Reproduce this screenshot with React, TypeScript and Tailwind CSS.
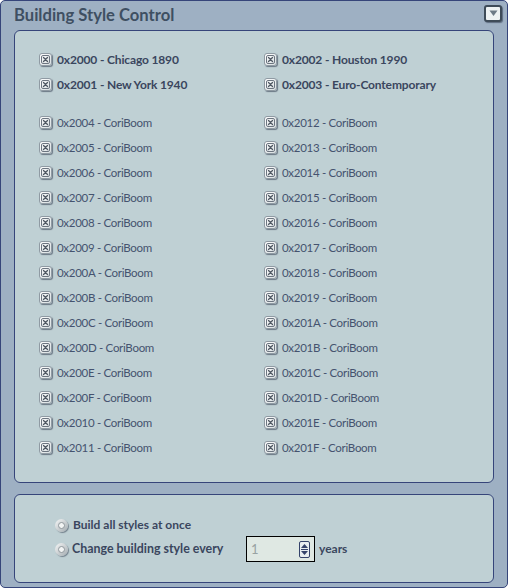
import React from 'react';

const FEATURED = [
  ['0x2000 - Chicago 1890', '0x2002 - Houston 1990'],
  ['0x2001 - New York 1940', '0x2003 - Euro-Contemporary'],
];

const LEFT = ['2004', '2005', '2006', '2007', '2008', '2009', '200A', '200B', '200C', '200D', '200E', '200F', '2010', '2011'];
const RIGHT = ['2012', '2013', '2014', '2015', '2016', '2017', '2018', '2019', '201A', '201B', '201C', '201D', '201E', '201F'];

const CheckBox = () => (
  <span className="relative w-[13px] h-[13px] shrink-0 rounded-[3px] border border-[#8f9aa3] bg-gradient-to-br from-[#ffffff] to-[#d7dee0] shadow-[1px_1px_1px_rgba(40,50,70,0.55)] flex items-center justify-center">
    <svg width="9" height="9" viewBox="0 0 9 9">
      <rect x="0.5" y="0.5" width="8" height="8" rx="1.5" fill="none" stroke="#6c7580" strokeWidth="1" />
      <path d="M2.5 2.5 L6.5 6.5 M6.5 2.5 L2.5 6.5" stroke="#4f5863" strokeWidth="1.3" strokeLinecap="round" />
    </svg>
  </span>
);

const Radio = () => (
  <span className="w-[13px] h-[13px] shrink-0 rounded-full bg-gradient-to-br from-[#f7f8f8] to-[#a3abb0] shadow-[1px_1px_1px_rgba(40,50,70,0.5)] flex items-center justify-center">
    <span className="w-[7px] h-[7px] rounded-full border border-[#8f979c] bg-[#f2f4f4]" />
  </span>
);

const Item = ({ label, bold }: { label: string; bold?: boolean }) => (
  <div className="h-[25px] flex items-center gap-[5px]">
    <CheckBox />
    <span className={`leading-none ${bold ? 'text-[12px] tracking-[-0.15px] font-bold text-[#3a465e]' : 'text-[11.5px] tracking-[-0.3px] text-[#45536f]'}`}>{label}</span>
  </div>
);

export default function App() {
  return (
    <div className="w-[508px] h-[588px] bg-[#9eb0c3] border border-[#36457a] rounded-[5px] flex flex-col px-[13px] pb-[5px]" style={{ fontFamily: 'Lato, "Open Sans", sans-serif' }}>
      <div className="h-[29px] flex items-center justify-between shrink-0">
        <h1 className="text-[16.6px] font-bold text-[#3e4f62] -mt-[1px]">Building Style Control</h1>
        <button className="w-[18px] h-[17px] -mr-[8px] -mt-[4px] rounded-[3px] border-2 border-[#3e4b58] bg-[#eef2f3] shadow-[1px_1px_1px_rgba(30,40,60,0.5)] flex items-center justify-center">
          <svg width="9" height="7" viewBox="0 0 9 7"><path d="M0.5 0.5 L8.5 0.5 L4.5 6 Z" fill="#6d7a86" /></svg>
        </button>
      </div>

      <div className="h-[453px] shrink-0 rounded-[6px] border border-[#36457a] bg-[#bfd0d4] pt-[16px] pl-[24px]">
        <div className="grid grid-cols-[225px_1fr]">
          {FEATURED.map(([a, b]) => (
            <React.Fragment key={a}>
              <Item label={a} bold />
              <Item label={b} bold />
            </React.Fragment>
          ))}
        </div>
        <div className="grid grid-cols-[225px_1fr] mt-[13px]">
          {LEFT.map((l, i) => (
            <React.Fragment key={l}>
              <Item label={`0x${l} - CoriBoom`} />
              <Item label={`0x${RIGHT[i]} - CoriBoom`} />
            </React.Fragment>
          ))}
        </div>
      </div>

      <div className="mt-[11px] h-[89px] shrink-0 rounded-[6px] border border-[#36457a] bg-[#bfd0d4] pt-[18px] pl-[40px]">
        <div className="h-[24px] flex items-center gap-[5px]">
          <Radio />
          <span className="text-[12px] font-bold text-[#3a465e]">Build all styles at once</span>
        </div>
        <div className="h-[24px] flex items-center">
          <Radio />
          <span className="ml-[4px] w-[174px] text-[12.4px] font-bold text-[#3a465e]">Change building style every</span>
          <div className="w-[69px] h-[26px] border border-black bg-[#dfe8e3] flex items-center justify-between pl-[4px] pr-[4px]">
            <span className="text-[13px] text-[#98a2a2] leading-none">1</span>
            <span className="w-[11px] h-[17px] rounded-[2px] border border-[#34426a] bg-[#e8eef0] flex flex-col items-center justify-center gap-[1px]">
              <svg width="7" height="4" viewBox="0 0 7 4"><path d="M0 4 L3.5 0 L7 4 Z" fill="#34426a" /></svg>
              <span className="w-[7px] h-px bg-[#34426a]" />
              <svg width="7" height="4" viewBox="0 0 7 4"><path d="M0 0 L3.5 4 L7 0 Z" fill="#34426a" /></svg>
            </span>
          </div>
          <span className="ml-[4px] text-[12px] font-bold text-[#3a465e]">years</span>
        </div>
      </div>
    </div>
  );
}
